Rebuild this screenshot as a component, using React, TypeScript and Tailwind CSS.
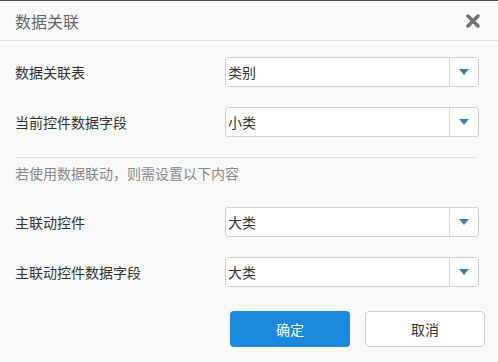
import React from 'react';

function SelectBox({ value }: { value: string }) {
    return (
        <div className="flex h-[30px] w-[254px] items-center rounded-[3px] border border-[#cfcfcf] bg-white">
            <span className="flex-1 pl-[2px] text-[14px] text-[#333]">{value}</span>
            <span className="flex h-full w-[29px] items-center justify-center border-l border-[#d6d6d6]">
                <svg width="10" height="6" viewBox="0 0 10 6">
                    <path d="M0 0 L10 0 L5 6 Z" fill="#3b7fb3" />
                </svg>
            </span>
        </div>
    );
}

function FormRow({ label, value }: { label: string; value: string }) {
    return (
        <div className="flex items-center">
            <label className="w-[210px] text-[14px] text-[#333]">{label}</label>
            <SelectBox value={value} />
        </div>
    );
}

function App() {
    return (
        <div
            className="h-[362px] w-[498px] overflow-hidden border-t border-[#4a4a4a] bg-[#f9f9f9]"
            style={{ fontFamily: '"Noto Sans CJK SC", "Liberation Sans", sans-serif' }}
        >
            <header className="flex h-[40px] items-center justify-between border-b border-[#e3e3e3] pl-[15px] pr-[18px]">
                <h1 className="text-[16px] text-[#666]">数据关联</h1>
                <svg width="14" height="14" viewBox="0 0 14 14">
                    <path d="M2 2 L12 12 M12 2 L2 12" stroke="#6f6f6f" strokeWidth="3.4" strokeLinecap="round" />
                </svg>
            </header>

            <main className="flex flex-col pl-[15px] pt-[16px]">
                <div className="flex flex-col gap-[20px]">
                    <FormRow label="数据关联表" value="类别" />
                    <FormRow label="当前控件数据字段" value="小类" />
                </div>

                <div className="mt-[20px] w-[462px] border-t border-[#e2e2e2]" />
                <p className="mt-[5px] h-[20px] text-[14px] leading-[20px] text-[#888]">若使用数据联动，则需设置以下内容</p>

                <div className="mt-[24px] flex flex-col gap-[20px]">
                    <FormRow label="主联动控件" value="大类" />
                    <FormRow label="主联动控件数据字段" value="大类" />
                </div>

                <div className="mt-[24px] flex gap-[15px] pl-[215px]">
                    <button className="h-[36px] w-[120px] rounded-[4px] bg-[#1a88dc] text-[14px] text-white">确定</button>
                    <button className="h-[36px] w-[120px] rounded-[4px] border border-[#cccccc] bg-white text-[14px] text-[#333]">取消</button>
                </div>
            </main>
        </div>
    );
}

export default App;
